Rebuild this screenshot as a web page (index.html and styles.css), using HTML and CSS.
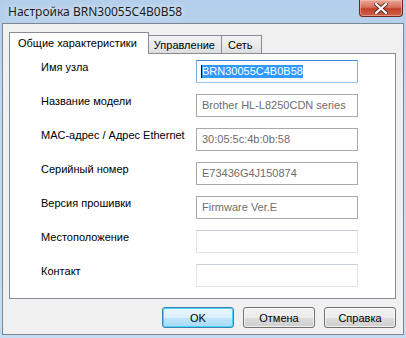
FILE: index.html
```html
<!DOCTYPE html>
<html lang="ru">
<head>
  <meta charset="UTF-8" />
  <title>Настройка BRN30055C4B0B58</title>
  <link rel="stylesheet" href="styles.css">
</head>
<body>
  <div class="window">
    <div class="titlebar">
      <span class="title">Настройка BRN30055C4B0B58</span>
      <div class="close">
        <svg width="14" height="11" viewBox="0 0 14 11">
          <path d="M2 1 L12 10 M12 1 L2 10" stroke="#5a2a25" stroke-width="4" stroke-linecap="square"/>
          <path d="M2 1 L12 10 M12 1 L2 10" stroke="#ffffff" stroke-width="2.2" stroke-linecap="square"/>
        </svg>
      </div>
    </div>

    <div class="client">
      <div class="tabs">
        <div class="tab active">Общие характеристики</div>
        <div class="tab">Управление</div>
        <div class="tab last">Сеть</div>
      </div>

      <div class="panel">
        <div class="row">
          <label>Имя узла</label>
          <div class="field focus"><span class="caret"></span><span class="sel">BRN30055C4B0B58</span></div>
        </div>
        <div class="row">
          <label>Название модели</label>
          <div class="field readonly">Brother HL-L8250CDN series</div>
        </div>
        <div class="row">
          <label>MAC-адрес / Адрес Ethernet</label>
          <div class="field readonly">30:05:5c:4b:0b:58</div>
        </div>
        <div class="row">
          <label>Серийный номер</label>
          <div class="field readonly">E73436G4J150874</div>
        </div>
        <div class="row">
          <label>Версия прошивки</label>
          <div class="field readonly">Firmware Ver.E</div>
        </div>
        <div class="row">
          <label>Местоположение</label>
          <div class="field"></div>
        </div>
        <div class="row">
          <label>Контакт</label>
          <div class="field"></div>
        </div>
      </div>

      <div class="buttons">
        <button class="btn default">OK</button>
        <button class="btn">Отмена</button>
        <button class="btn">Справка</button>
      </div>
    </div>
  </div>
</body>
</html>
```

FILE: styles.css
```css
body {
  margin: 0;
  padding: 0;
  font-family: 'Liberation Sans', Arial, sans-serif;
  font-size: 11px;
  color: #000;
  background: #fff;
}

.window {
  width: 406px;
  height: 338px;
  box-sizing: border-box;
  padding: 0 2px 3px 2px;
  background: linear-gradient(180deg, #b4cfeb 0%, #c4daf0 40%, #c6dcf1 100%);
  display: flex;
  flex-direction: column;
}

.titlebar {
  height: 23px;
  display: flex;
  justify-content: space-between;
  align-items: flex-start;
}

.title {
  margin: 3px 0 0 6px;
  font-family: 'Noto Sans', sans-serif;
  font-size: 12px;
  color: #1c1c1c;
  text-shadow: 0 0 6px rgba(255, 255, 255, 0.9);
}

.close {
  width: 44px;
  height: 17px;
  margin-right: 1px;
  box-sizing: border-box;
  border: 1px solid #6e2a22;
  border-top: none;
  border-radius: 0 0 4px 4px;
  background: linear-gradient(180deg, #e9a99a 0%, #d8705c 45%, #c2412a 55%, #d0604a 100%);
  box-shadow: inset 0 0 0 1px rgba(255, 200, 180, 0.5);
  display: flex;
  justify-content: center;
  align-items: center;
}

.client {
  flex: 1;
  border: 1px solid #7b8796;
  background: #f0f0f0;
  display: flex;
  flex-direction: column;
  padding: 8px 7px 0 6px;
}

.tabs {
  display: flex;
  align-items: flex-end;
  height: 21px;
  position: relative;
  z-index: 1;
}

.tab {
  height: 18px;
  box-sizing: border-box;
  padding: 0 6px 0 5px;
  border: 1px solid #898c95;
  border-bottom: none;
  margin-left: -1px;
  background: linear-gradient(180deg, #f3f3f3 0%, #ebebeb 50%, #dddddd 100%);
  line-height: 18px;
}

.tab.last {
  padding: 0 9px 0 6px;
}

.tab.active {
  height: 22px;
  margin: 0 0 -1px 0;
  padding: 0 11px 0 8px;
  background: #fff;
  line-height: 20px;
}

.panel {
  height: 246px;
  box-sizing: border-box;
  border: 1px solid #898c95;
  background: #fff;
  padding: 6px 0 0 31px;
  display: flex;
  flex-direction: column;
  gap: 11px;
}

.row {
  display: flex;
  align-items: flex-start;
}

.row label {
  width: 155px;
  line-height: 15px;
  white-space: nowrap;
}

.field {
  width: 162px;
  height: 23px;
  box-sizing: border-box;
  border: 1px solid #dfe4ea;
  border-top-color: #c9cfd7;
  padding: 0 5px;
  line-height: 21px;
  color: #6d6d6d;
  background: #fff;
  white-space: nowrap;
  overflow: hidden;
  display: flex;
  align-items: center;
}

.field.readonly {
  border-color: #a9a9a9;
}

.field.focus {
  padding-left: 4px;
  border-color: #3d8ee0;
  border-bottom-color: #9ac6ef;
  border-left-color: #7ab3e8;
  border-right-color: #7ab3e8;
}

.caret {
  width: 1px;
  height: 13px;
  background: #000;
}

.sel {
  background: #3399ff;
  color: #fff;
  line-height: 13px;
  height: 13px;
}

.buttons {
  display: flex;
  justify-content: flex-end;
  gap: 9px;
  margin-top: 8px;
}

.btn {
  width: 72px;
  height: 21px;
  box-sizing: border-box;
  border: 1px solid #707070;
  border-radius: 3px;
  background: linear-gradient(180deg, #f2f2f2 0%, #ebebeb 50%, #dddddd 51%, #cfcfcf 100%);
  box-shadow: inset 0 0 0 1px rgba(255, 255, 255, 0.7);
  font-family: 'Liberation Sans', Arial, sans-serif;
  font-size: 11px;
  color: #000;
  padding: 0;
}

.btn.default {
  border-color: #3c7fb1;
  box-shadow: inset 0 0 0 1px #48d4fb;
  background: linear-gradient(180deg, #eaf6fd 0%, #d9f0fc 50%, #bee6fd 51%, #a7d9f5 100%);
}
```
